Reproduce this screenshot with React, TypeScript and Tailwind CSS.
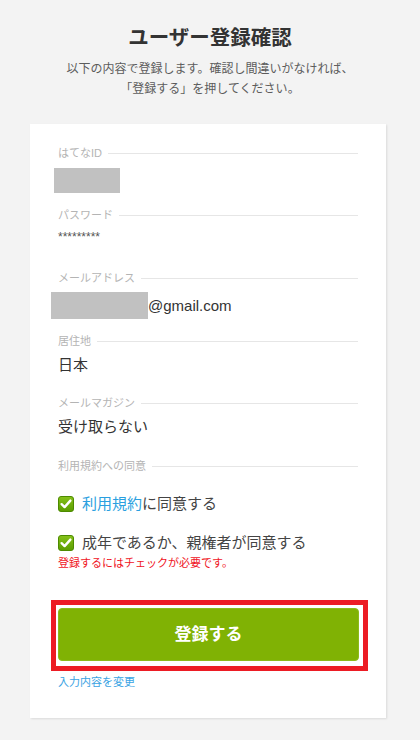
const font = { fontFamily: '"Liberation Sans", "Noto Sans CJK JP", sans-serif' }

const Label = ({ text, className = '' }: { text: string; className?: string }) => (
    <div className={`flex items-center h-4 ${className}`}>
        <span className="text-[11px] leading-4 text-[#b4b4b4] whitespace-nowrap">{text}</span>
        <div className="flex-1 h-px bg-[#e6e6e6] ml-[6px]" />
    </div>
)

const CheckIcon = () => (
    <svg width="16" height="16" viewBox="0 0 16 16" className="shrink-0">
        <defs>
            <linearGradient id="cg" x1="0" y1="0" x2="0" y2="1">
                <stop offset="0" stopColor="#86c21a" />
                <stop offset="1" stopColor="#5a9c00" />
            </linearGradient>
        </defs>
        <rect x="0.5" y="0.5" width="15" height="15" rx="2.5" fill="url(#cg)" stroke="#4d8a00" />
        <path d="M3.6 8.2 L6.6 11.1 L12.4 4.6" fill="none" stroke="#fff" strokeWidth="2.4" strokeLinecap="round" strokeLinejoin="round" />
    </svg>
)

const App = () => {
    return (
        <div className="min-h-[740px] bg-[#f3f3f3] pt-[24px] pb-[22px]" style={font}>
            <h1 className="text-center text-[20.5px] leading-[28px] font-bold text-[#333]">ユーザー登録確認</h1>
            <p className="mt-[7px] text-center text-[12px] leading-[20px] text-[#5c5c5c]">
                以下の内容で登録します。確認し間違いがなければ、
                <br />
                「登録する」を押してください。
            </p>

            <div className="mt-[25px] ml-[30px] w-[356px] bg-white shadow-[1px_1px_2px_rgba(0,0,0,0.1)] px-[28px] pt-[21px] pb-[29px]">
                <Label text="はてなID" />
                <div className="mt-[7px] -ml-[4px] w-[66px] h-[25px] bg-[#c1c1c1]" />

                <Label text="パスワード" className="mt-[14px]" />
                <div className="mt-[6px] text-[12px] leading-4 text-[#555]">*********</div>

                <Label text="メールアドレス" className="mt-[25px]" />
                <div className="mt-[6px] -ml-[7px] flex items-center h-[27px]">
                    <div className="w-[97px] h-[27px] bg-[#c1c1c1]" />
                    <span className="text-[15px] text-[#333] leading-[22px]">@gmail.com</span>
                </div>

                <Label text="居住地" className="mt-[14px]" />
                <div className="mt-[5px] text-[15px] leading-[22px] text-[#333]">日本</div>

                <Label text="メールマガジン" className="mt-[19px]" />
                <div className="mt-[5px] text-[15px] leading-[22px] text-[#333]">受け取らない</div>

                <Label text="利用規約への同意" className="mt-[20px]" />
                <div className="mt-[19px] flex items-center gap-[8px] h-[22px] text-[15px] text-[#444]">
                    <CheckIcon />
                    <span>
                        <span className="text-[#2a9fe0]">利用規約</span>に同意する
                    </span>
                </div>
                <div className="mt-[17px] flex items-center gap-[8px] h-[22px] text-[15px] text-[#444]">
                    <CheckIcon />
                    <span>成年であるか、親権者が同意する</span>
                </div>
                <p className="mt-[2px] text-[11px] leading-[14px] text-[#f0141e]">登録するにはチェックが必要です。</p>

                <div className="mt-[30px] -ml-[7px] w-[317px] h-[71px] border-[5px] border-[#ec1c24] pt-[3px] pl-[2px]">
                    <button className="w-[301px] h-[53px] rounded-[4px] bg-[#80b204] border border-[#8cbb1c] text-white text-[17px] font-bold">
                        登録する
                    </button>
                </div>
                <a className="block mt-[4px] text-[11px] leading-[14px] text-[#3aa3e3]">入力内容を変更</a>
            </div>
        </div>
    )
}

export default App
